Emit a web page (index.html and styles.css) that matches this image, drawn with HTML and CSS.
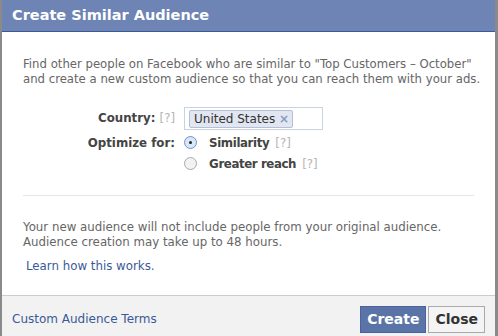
FILE: index.html
```html
<!DOCTYPE html>
<html lang="en">
<head>
<meta charset="UTF-8">
<title>Create Similar Audience</title>
<link rel="stylesheet" href="styles.css">
</head>
<body>

<div class="dialog">
    <div class="title">Create Similar Audience</div>
    <div class="content">
        <p class="intro">Find other people on Facebook who are similar to "Top Customers – October"<br>and create a new custom audience so that you can reach them with your ads.</p>
        <div class="form">
            <div class="row">
                <div class="label">Country: <span class="help">[?]</span></div>
                <div class="field">
                    <div class="token-input">
                        <span class="token">United States <span class="remove">×</span></span>
                    </div>
                </div>
            </div>
            <div class="row">
                <div class="label">Optimize for:</div>
                <div class="field">
                    <span class="radio checked"></span>
                    <span class="option">Similarity</span> <span class="help">[?]</span>
                </div>
            </div>
            <div class="row">
                <div class="label"></div>
                <div class="field">
                    <span class="radio"></span>
                    <span class="option">Greater reach</span> <span class="help">[?]</span>
                </div>
            </div>
        </div>
        <hr class="divider">
        <p class="note">Your new audience will not include people from your original audience.<br>Audience creation may take up to 48 hours.</p>
        <a class="learn" href="#">Learn how this works.</a>
    </div>
    <div class="footer">
        <a class="terms" href="#">Custom Audience Terms</a>
        <div class="buttons">
            <button class="btn primary">Create</button>
            <button class="btn">Close</button>
        </div>
    </div>
</div>

</body>
</html>
```

FILE: styles.css
```css
body {
    margin: 0;
    font-family: "DejaVu Sans", sans-serif;
    background: #fff;
}
.dialog {
    width: 498px;
    height: 336px;
    box-sizing: border-box;
    border-left: 2px solid #8a8a8a;
    border-right: 3px solid #8a8a8a;
    display: flex;
    flex-direction: column;
}
.title {
    height: 31px;
    background: #6d84b4;
    color: #fff;
    font-size: 14.5px;
    font-weight: bold;
    line-height: 31px;
    padding-left: 10px;
    border-bottom: 1px solid #3b5998;
}
.content {
    flex: 1;
    padding: 0 21px;
    color: #666;
    font-size: 11.8px;
}
.intro {
    margin: 25px 0 0;
    line-height: 15px;
    font-size: 11.7px;
    white-space: nowrap;
}
.form {
    margin-top: 19px;
}
.row {
    display: flex;
    align-items: center;
    height: 21px;
    color: #444;
    font-weight: bold;
}
.row:first-child {
    height: 24px;
    margin-bottom: 2px;
}
.label {
    width: 161px;
    text-align: right;
    padding-right: 9px;
    box-sizing: border-box;
}
.help {
    color: #b5b5b5;
    font-weight: normal;
}
.token-input {
    width: 139px;
    height: 23px;
    border: 1px solid #c9d2e2;
    box-sizing: border-box;
    padding: 2px 4px;
}
.token {
    display: inline-block;
    background: #e1e6f0;
    border: 1px solid #b4c0d8;
    border-radius: 2px;
    padding: 0 3px 0 4px;
    line-height: 16px;
    font-weight: normal;
    color: #333;
    font-size: 12px;
}
.remove {
    color: #8a9bbd;
    font-weight: bold;
}
.radio {
    display: inline-block;
    width: 13px;
    height: 13px;
    border: 1px solid #aaa;
    border-radius: 50%;
    background: #f2f2f2;
    margin-right: 8px;
    box-sizing: border-box;
    position: relative;
    vertical-align: -2px;
}
.radio.checked {
    border-color: #6f95c6;
    background: #d7e7f7;
}
.radio.checked::after {
    content: "";
    position: absolute;
    left: 4px;
    top: 4px;
    width: 3px;
    height: 3px;
    border-radius: 50%;
    background: #222;
}
.option {
    margin-right: 2px;
    letter-spacing: -0.4px;
}
.divider {
    border: 0;
    border-top: 1px solid #e5e5e5;
    margin: 21px 0 0;
}
.note {
    margin: 24px 0 0;
    line-height: 15px;
}
.learn {
    display: block;
    margin: 9px 0 0 3px;
    color: #3b5998;
    text-decoration: none;
}
.footer {
    height: 41px;
    box-sizing: border-box;
    background: #f2f2f2;
    border-top: 1px solid #ccc;
    display: flex;
    align-items: center;
    justify-content: space-between;
    padding: 6px 10px 0 10px;
}
.terms {
    color: #3b5998;
    font-size: 12px;
    text-decoration: none;
}
.buttons {
    display: flex;
    gap: 2px;
}
.btn {
    font-family: "DejaVu Sans", sans-serif;
    font-weight: bold;
    font-size: 14px;
    height: 27px;
    padding: 0 6px;
    border: 1px solid #aaa;
    background: #f4f4f4;
    color: #333;
}
.btn.primary {
    background: #5b74a8;
    border-color: #4a63a0;
    color: #fff;
    padding: 0 6px;
}
```
